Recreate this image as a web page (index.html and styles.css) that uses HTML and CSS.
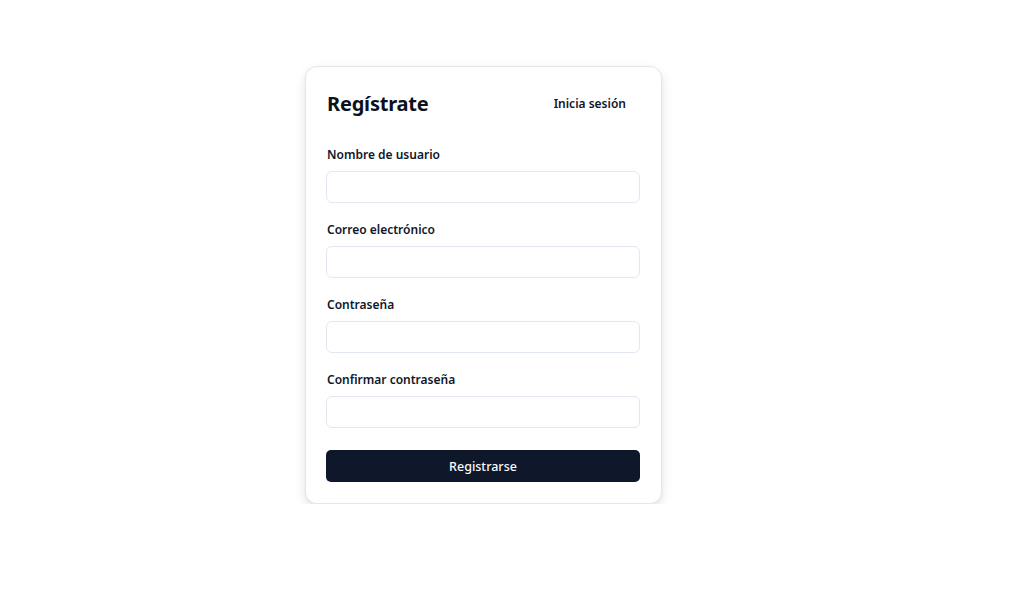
FILE: index.html
```html
<!DOCTYPE html>
<html lang="es">
<head>
<meta charset="utf-8">
<title>Regístrate</title>
<link rel="stylesheet" href="styles.css">
</head>
<body>
<main class="page">
  <section class="card">
    <header class="card-header">
      <h1 class="title">Regístrate</h1>
      <button class="link-btn" type="button">Inicia sesión</button>
    </header>
    <form class="form">
      <div class="field">
        <label class="label" for="u">Nombre de usuario</label>
        <input class="input" id="u" type="text">
      </div>
      <div class="field">
        <label class="label" for="e">Correo electrónico</label>
        <input class="input" id="e" type="email">
      </div>
      <div class="field">
        <label class="label" for="p">Contraseña</label>
        <input class="input" id="p" type="password">
      </div>
      <div class="field">
        <label class="label" for="c">Confirmar contraseña</label>
        <input class="input" id="c" type="password">
      </div>
      <button class="submit" type="submit">Registrarse</button>
    </form>
  </section>
</main>
</body>
</html>
```

FILE: styles.css
```css
* { box-sizing: border-box; }
html, body { margin: 0; background: #fff; }
body {
  font-family: "Noto Sans", "Open Sans", sans-serif;
  color: #0f172a;
}
.page {
  padding: 66px 0 0 305px;
}
.card {
  width: 357px;
  border: 1px solid #e5e7eb;
  border-radius: 12px;
  padding: 20px 20px 21px;
  background: #fff;
  box-shadow: 0 5px 12px rgba(15, 23, 42, 0.1), 0 1px 3px rgba(15, 23, 42, 0.05);
}
.card-header {
  display: flex;
  align-items: center;
  justify-content: space-between;
  height: 32px;
}
.title {
  margin: 0 0 0 1px;
  font-size: 20px;
  font-weight: 700;
  letter-spacing: -0.2px;
  color: #0b1120;
}
.link-btn {
  height: 32px;
  padding: 0 15px 0 0;
  border: 0;
  background: transparent;
  font-family: inherit;
  font-size: 12px;
  font-weight: 600;
  color: #0f172a;
}
.form {
  margin-top: 25px;
  display: flex;
  flex-direction: column;
}
.field {
  display: flex;
  flex-direction: column;
  gap: 6px;
  margin-bottom: 16px;
}
.label {
  padding-left: 1px;
  font-size: 12px;
  font-weight: 600;
  line-height: 21px;
  color: #0f172a;
}
.input {
  height: 32px;
  margin-right: 1px;
  border: 1px solid #e2e8f0;
  border-radius: 6px;
  background: #fff;
  font-family: inherit;
}
.submit {
  margin: 6px 1px 0 0;
  height: 32px;
  border: 0;
  border-radius: 5px;
  background: #0f172a;
  color: #f8fafc;
  font-family: inherit;
  font-size: 12.5px;
  font-weight: 500;
}
```
